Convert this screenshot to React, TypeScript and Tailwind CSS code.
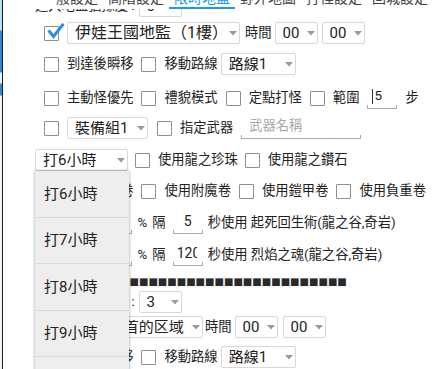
import React from 'react';

const Box = ({ checked }: { checked?: boolean }) => (
  <span className="relative block w-[15px] h-[15px] shrink-0 border border-[#8e8e8e] rounded-[1px] bg-white">
    {checked && (
      <svg className="absolute left-0 top-[-4px] w-[20px] h-[18px]" viewBox="0 0 20 18">
        <path d="M4.5 8.5 L8.5 13.5 L17.5 2" stroke="#2f8ee0" strokeWidth="3" fill="none" strokeLinecap="square" />
      </svg>
    )}
  </span>
);

const Arrow = () => (
  <svg className="w-[8px] h-[5px] shrink-0" viewBox="0 0 8 5">
    <path d="M0 0 H8 L4 4.5 Z" fill="#9a9a9a" />
  </svg>
);

const Sel = ({ text, cls }: { text: string; cls: string }) => (
  <div className={`flex items-center h-[22px] shrink-0 border border-[#d8d8d8] rounded-[2px] bg-white pl-[7px] pr-[2px] text-[15px] ${cls}`}>
    <span className="flex-1 whitespace-nowrap overflow-hidden">{text}</span>
    <Arrow />
  </div>
);

const Field = ({ cls, children }: { cls: string; children?: React.ReactNode }) => (
  <div className={`flex flex-col h-[22px] shrink-0 ${cls}`}>
    <div className="flex-1 flex items-center overflow-hidden">{children}</div>
    <div className="h-[4px] border-x border-b border-[#a9a9a9]" />
  </div>
);

const Check = ({ label, checked }: { label: string; checked?: boolean }) => (
  <div className="flex items-center gap-[8px] shrink-0">
    <Box checked={checked} />
    <span className="whitespace-nowrap">{label}</span>
  </div>
);

const tabs = ['一般設定', '高階設定', '限時地監', '野外地圖', '打怪設定', '回城設定'];
const hours = ['打6小時', '打7小時', '打8小時', '打9小時', '打10小時'];

export default function App() {
  return (
    <div className="w-[437px] h-[369px] overflow-hidden bg-white flex text-[#222] text-[13.3px] font-['Roboto','Noto_Sans_CJK_TC',sans-serif]">
      <div className="w-[2px] shrink-0 bg-[linear-gradient(180deg,#b9e0f5_0px,#b9e0f5_30px,#2d8ad8_31px,#2d8ad8_72px,#e8f2fa_73px,#e8f2fa_83px,#2d8ad8_84px,#2d8ad8_95px,#f2f2f2_96px)]" />
      <div className="w-[1px] shrink-0 bg-[#1c1c1c]" />

      <div className="relative flex-1 overflow-hidden">
        <div className="flex flex-col pl-[32px] leading-none">
          {/* 進入地監猶豫度 */}
          <div className="flex items-center h-[22px] -mt-[5px] gap-[4px]">
            <span className="whitespace-nowrap">進入地監猶豫度 :</span>
            <Sel text="0" cls="w-[43px]" />
          </div>

          <div className="flex items-center h-[22px] mt-[5px] pl-[9px]">
            <Box checked />
            <Sel text="伊娃王國地監（1樓）" cls="min-w-[173px] basis-[173px] ml-[8px] text-[16px]" />
            <span className="ml-[5px] whitespace-nowrap">時間</span>
            <Sel text="00" cls="w-[43px] ml-[3px]" />
            <Sel text="00" cls="w-[43px] ml-[4px]" />
          </div>

          <div className="flex items-center h-[22px] mt-[9px] pl-[9px] gap-[8px]">
            <Check label="到達後瞬移" />
            <Check label="移動路線" />
            <Sel text="路線1" cls="w-[75px] -ml-[5px]" />
          </div>

          <div className="flex items-center h-[22px] mt-[12px] pl-[9px] gap-[8px]">
            <Check label="主動怪優先" />
            <Check label="禮貌模式" />
            <Check label="定點打怪" />
            <Check label="範圍" />
            <Field cls="w-[30px]">
              <span className="w-[1px] h-[15px] bg-[#333] ml-[5px]" />
              <span className="ml-[1px] text-[13.5px]">5</span>
            </Field>
            <span>步</span>
          </div>

          <div className="flex items-center h-[22px] mt-[8px] pl-[9px]">
            <Box />
            <Sel text="裝備組1" cls="w-[81px] ml-[8px]" />
            <div className="ml-[9px] flex items-center gap-[8px]">
              <Check label="指定武器" />
              <Field cls="w-[120px]">
                <span className="pl-[8px] text-[#a8a8a8]">武器名稱</span>
              </Field>
            </div>
          </div>

          <div className="flex items-center h-[22px] mt-[10px] gap-[7px]">
            <Sel text="打6小時" cls="w-[93px]" />
            <Check label="使用龍之珍珠" />
            <Check label="使用龍之鑽石" />
          </div>

          <div className="flex items-center h-[22px] mt-[9px] pl-[9px] gap-[8px]">
            <Check label="使用變身卷" />
            <Check label="使用附魔卷" />
            <Check label="使用鎧甲卷" />
            <Check label="使用負重卷" />
          </div>

          <div className="flex items-center h-[22px] mt-[10px] pl-[9px]">
            <Check label="血量" />
            <Field cls="w-[30px] ml-[8px]">
              <span className="flex-1 text-center">50</span>
            </Field>
            <span className="ml-[6px]">%</span>
            <span className="ml-[5px]">隔</span>
            <Field cls="w-[30px] ml-[7px]">
              <span className="flex-1 text-center text-[14px]">5</span>
            </Field>
            <span className="ml-[5px] whitespace-nowrap">秒使用 起死回生術(龍之谷,奇岩)</span>
          </div>

          <div className="flex items-center h-[22px] mt-[10px] pl-[9px]">
            <Check label="魔量" />
            <Field cls="w-[30px] ml-[8px]">
              <span className="flex-1 text-center">30</span>
            </Field>
            <span className="ml-[6px]">%</span>
            <span className="ml-[5px]">隔</span>
            <Field cls="w-[30px] ml-[7px]">
              <div className="ml-[4px] w-[20px] overflow-hidden">
                <span className="text-[14px] whitespace-nowrap">120</span>
              </div>
            </Field>
            <span className="ml-[5px] whitespace-nowrap">秒使用 烈焰之魂(龍之谷,奇岩)</span>
          </div>

          <div className="flex items-center h-[10px] mt-[11px] overflow-hidden">
            <span className="whitespace-nowrap text-[10px] text-[#2a2a2a] font-['DejaVu_Sans',sans-serif]">
              {'■'.repeat(33)}
            </span>
          </div>

          <div className="flex items-center h-[22px] mt-[4px] gap-[4px]">
            <span className="whitespace-nowrap">進入地監猶豫度 :</span>
            <Sel text="3" cls="w-[43px]" />
          </div>

          <div className="flex items-center h-[22px] mt-[3px] pl-[9px]">
            <Box />
            <Sel text="龍之谷 首的区域" cls="w-[136px] ml-[8px]" />
            <span className="ml-[2px] whitespace-nowrap">時間</span>
            <Sel text="00" cls="w-[43px] ml-[3px]" />
            <Sel text="00" cls="w-[43px] ml-[5px]" />
          </div>

          <div className="flex items-center h-[22px] mt-[8px] pl-[9px] gap-[8px]">
            <Check label="到達後瞬移" />
            <Check label="移動路線" />
            <Sel text="路線1" cls="w-[75px] -ml-[5px]" />
          </div>
        </div>

        {/* tab bar */}
        <div className="absolute top-0 left-0 right-0 h-[9px] bg-white overflow-hidden">
          <div className="flex pl-[34px] -mt-[9px]">
            {tabs.map((t, i) => (
              <div key={t} className="w-[66px] flex flex-col items-center">
                <span className={`text-[14px] leading-[14px] whitespace-nowrap ${i === 2 ? 'text-[#2196f3]' : 'text-[#444]'}`}>{t}</span>
                <span className={`mt-[2px] h-[2px] w-full ${i === 2 ? 'bg-[#2196f3]' : ''}`} />
              </div>
            ))}
          </div>
        </div>

        {/* dropdown */}
        <div className="absolute left-[32px] top-[171px] w-[94px] bg-[#eeeeee] shadow-[0_0_3px_rgba(0,0,0,0.4)]">
          {hours.map(h => (
            <div key={h} className="h-[46.5px] flex items-center pl-[9px] border-b border-[#dcdcdc] text-[15px]">
              {h}
            </div>
          ))}
        </div>
      </div>
    </div>
  );
}
